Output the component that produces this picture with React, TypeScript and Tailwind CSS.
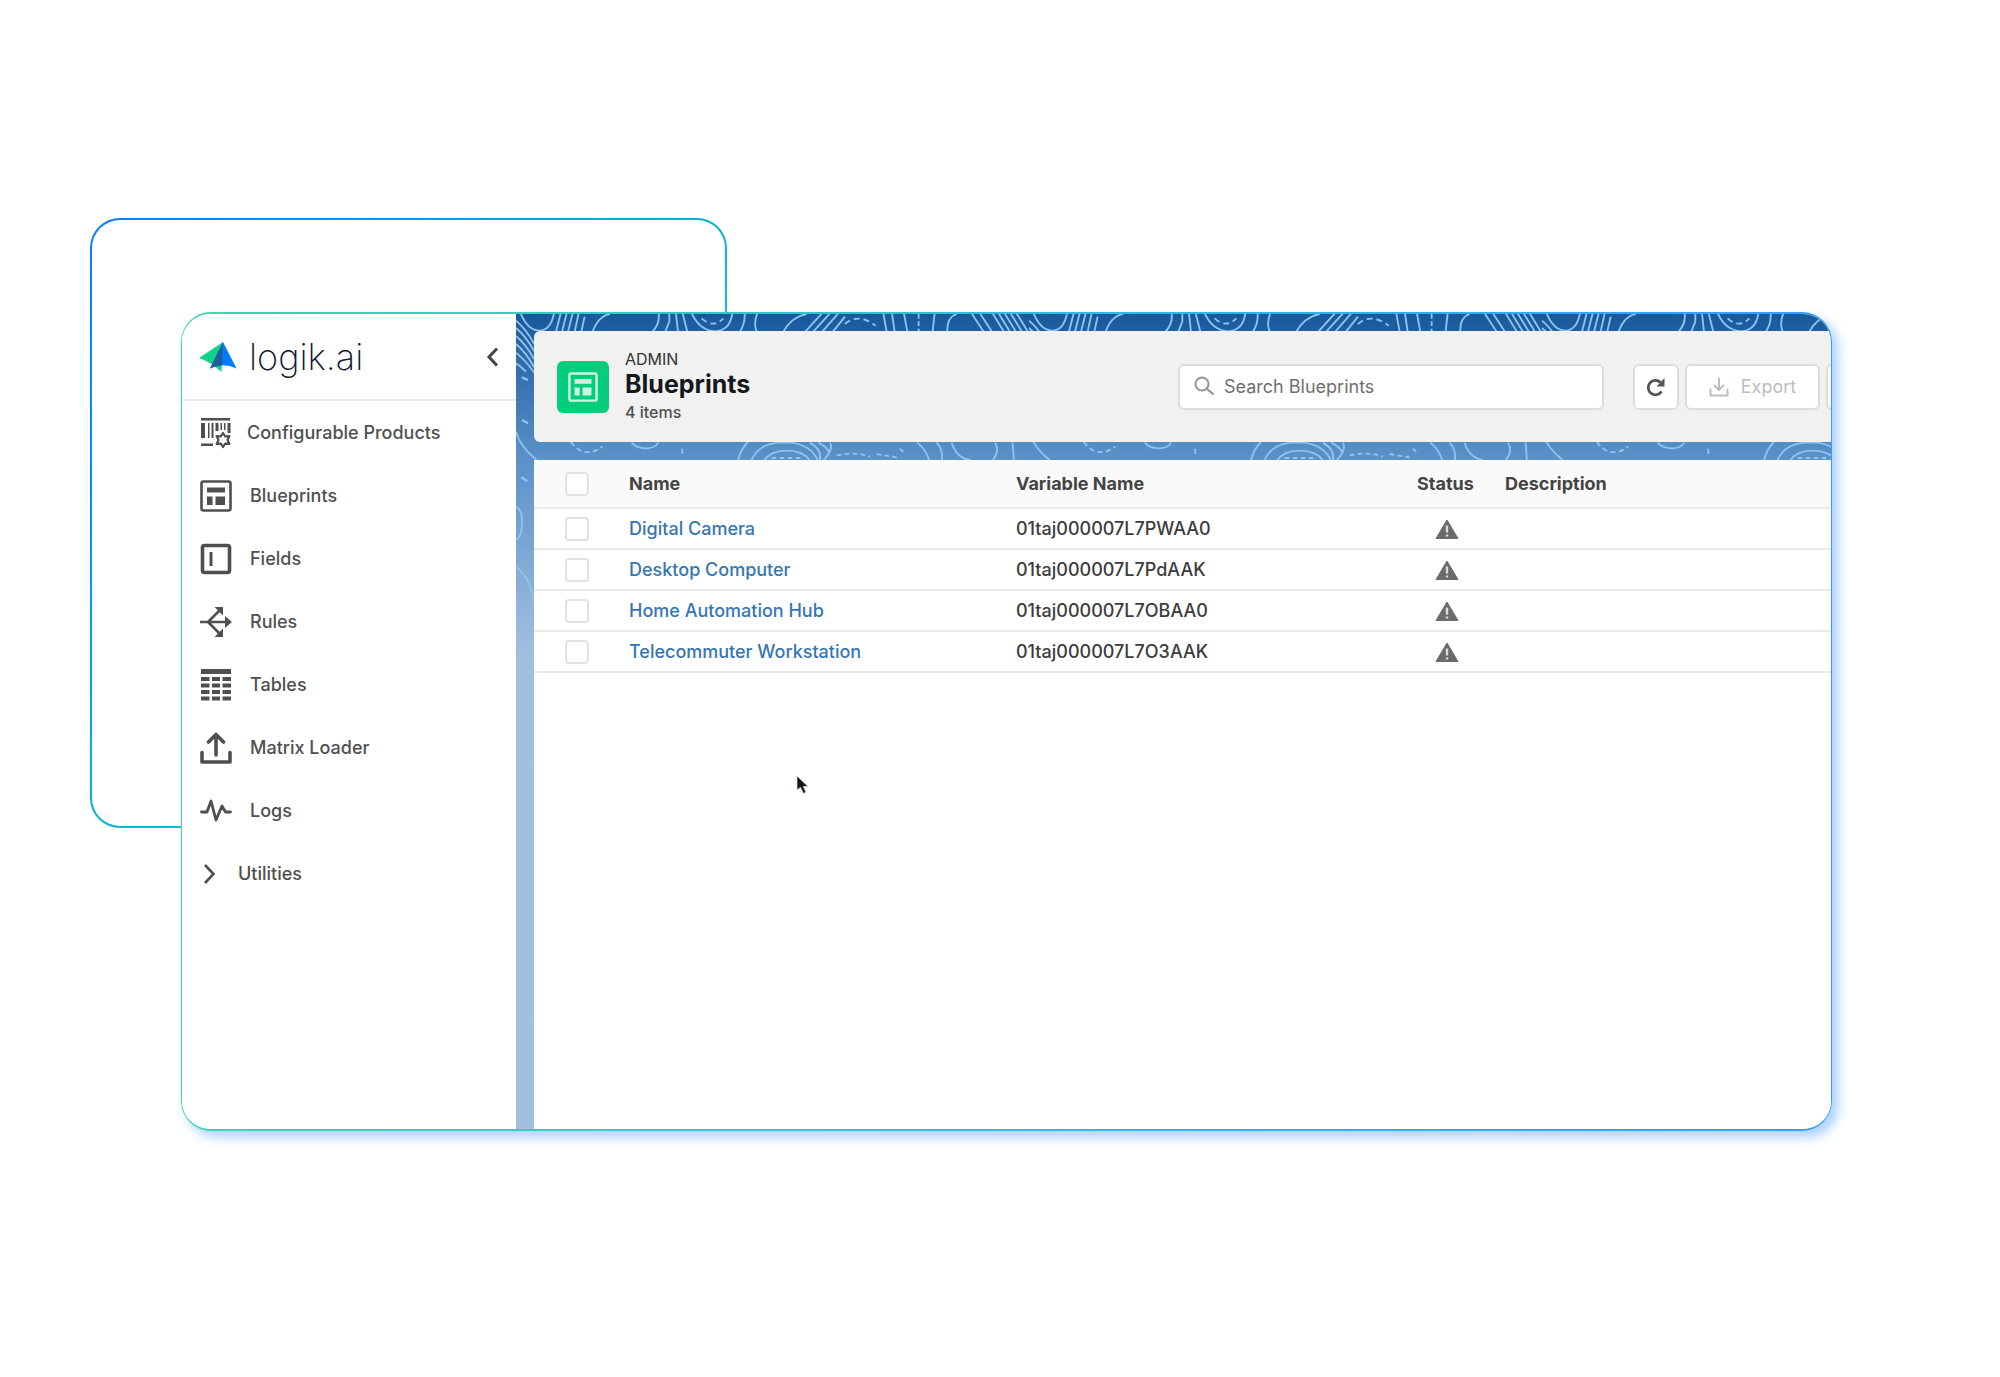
import React from "react"

type NavItem = {
    label: string
    gap: string
    icon: React.ReactNode
}

type Blueprint = {
    name: string
    variable: string
}

const ProductsIcon: React.FC = () => (
    <svg viewBox="0 0 32 32" className="size-8 shrink-0" fill="currentColor">
        <path d="M1 1h29v2.500H1zM1 6h4v15H1zM8 6h1.500v15H8zM11.500 6h2v15h-2zM15.500 6h3v8h-3zM20.500 6h1.500v7h-1.500zM24 6h1.500v7H24zM27.500 6h3v10h-3zM1 26.500h12v2.500H1z" />
        <path d="M23 16l2.200 3.400 4.200-.3-1.900 3.900 1.900 3.900-4.200-.3L23 30l-2.200-3.400-4.200.3 1.900-3.900-1.900-3.900 4.200.3z" fill="#fff" stroke="currentColor" strokeWidth="2.200" strokeLinejoin="round" />
    </svg>
)

const BlueprintIcon: React.FC<{ className: string }> = ({ className }) => (
    <svg viewBox="0 0 32 32" className={className} fill="currentColor">
        <rect x="1.500" y="1.500" width="29" height="29" rx="2" fill="none" stroke="currentColor" strokeWidth="2.600" />
        <path d="M7 7.500h18v5H7zM7 16.500h5.500v8.500H7zM15.500 16.500H25v8.500h-9.500z" />
    </svg>
)

const FieldsIcon: React.FC = () => (
    <svg viewBox="0 0 32 32" className="size-8 shrink-0">
        <rect x="2.500" y="2.500" width="27" height="27" rx="2" fill="none" stroke="currentColor" strokeWidth="3.600" />
        <path d="M9.500 9h3v14h-3z" fill="currentColor" />
    </svg>
)

const RulesIcon: React.FC = () => (
    <svg viewBox="0 0 32 32" className="size-8 shrink-0" fill="none" stroke="currentColor" strokeWidth="2.600">
        <path d="M0 16h28M8 16L20 4M8 16l12 12" />
        <path d="M14.500 1H23v8.500zM14.500 31H23v-8.500zM25 10l7 6-7 6z" fill="currentColor" stroke="none" />
    </svg>
)

const TablesIcon: React.FC = () => (
    <svg viewBox="0 0 32 32" className="size-8 shrink-0" fill="currentColor">
        <path d="M1 0h30v5H1z" />
        {[8, 14.500, 21, 27.500].map((y) => (
            <path key={y} d={`M1 ${y}h8.500v4H1zM12 ${y}h8v4h-8zM22.500 ${y}H31v4h-8.500z`} />
        ))}
    </svg>
)

const LoaderIcon: React.FC = () => (
    <svg viewBox="0 0 32 32" className="size-8 shrink-0" fill="none" stroke="currentColor" strokeWidth="3.600" strokeLinecap="round" strokeLinejoin="round">
        <path d="M2 20.500V30h28v-9.500M16 23V3M8.500 10L16 2.500l7.500 7.500" />
    </svg>
)

const LogsIcon: React.FC = () => (
    <svg viewBox="0 0 32 32" className="size-8 shrink-0" fill="none" stroke="currentColor" strokeWidth="2.800" strokeLinecap="round" strokeLinejoin="round">
        <path d="M1.500 17H7l4-11 5 19 6-14 3.500 6H30.500" />
    </svg>
)

const ChevronIcon: React.FC = () => (
    <svg viewBox="0 0 20 22" className="h-[22px] w-5 shrink-0" fill="none" stroke="currentColor" strokeWidth="2.600">
        <path d="M5 2l8.500 9L5 20" />
    </svg>
)

const WarningIcon: React.FC = () => (
    <svg viewBox="0 0 24 20" className="mx-auto h-5 w-6 text-[#6b6b6b]" aria-label="Warning">
        <path d="M12 1L23 19.500H1z" fill="currentColor" stroke="currentColor" strokeLinejoin="round" />
        <path d="M12 6.500v7M12 15.500v2" stroke="#dcdcdc" strokeWidth="2.400" />
    </svg>
)

const Logo: React.FC = () => (
    <svg viewBox="0 0 38 30" className="h-[30px] w-[38px] shrink-0">
        <path d="M24 0L0 16q12 4 22.500 14z" fill="#0fd488" />
        <path d="M24 0l13.500 26.500Q24 20 11 26.500z" fill="#007bff" />
        <path d="M24 0L11 26.500q6-3 12-3z" fill="#1c5f9c" />
    </svg>
)

const navItems: NavItem[] = [
    { label: "Configurable Products", gap: "gap-[15px]", icon: <ProductsIcon /> },
    { label: "Blueprints", gap: "gap-[18px]", icon: <BlueprintIcon className="size-8 shrink-0" /> },
    { label: "Fields", gap: "gap-[18px]", icon: <FieldsIcon /> },
    { label: "Rules", gap: "gap-[18px]", icon: <RulesIcon /> },
    { label: "Tables", gap: "gap-[18px]", icon: <TablesIcon /> },
    { label: "Matrix Loader", gap: "gap-[18px]", icon: <LoaderIcon /> },
    { label: "Logs", gap: "gap-[18px]", icon: <LogsIcon /> },
    { label: "Utilities", gap: "gap-[18px]", icon: <ChevronIcon /> },
]

const blueprints: Blueprint[] = [
    { name: "Digital Camera", variable: "01taj000007L7PWAA0" },
    { name: "Desktop Computer", variable: "01taj000007L7PdAAK" },
    { name: "Home Automation Hub", variable: "01taj000007L7OBAA0" },
    { name: "Telecommuter Workstation", variable: "01taj000007L7O3AAK" },
]

// contour lines behind the page, one tile repeats along the bar
const Contours: React.FC = () => (
    <svg className="absolute inset-0 h-full w-full" aria-hidden="true">
        <defs>
            <pattern id="contours" width="513" height="2000" patternUnits="userSpaceOnUse">
                <g transform="translate(-6 -14) scale(0.3333)" fill="none" stroke="#8fc4f0" strokeWidth="5.500">
                    <path d="M32 40q20 50 55 52q35 0 45-52M152 40l-14 55M170 40l-14 55M188 40l-14 55M206 40l-12 55M224 50l-10 45M300 42q-35 5-52 53" />
                    <path d="M446 40q4 30-18 55M478 40v25l-12 30M498 40l6 55M518 40l14 55M545 40q25 52 70 54q45-2 52-54M704 40q2 30-14 55M742 40q-12 30-2 55" />
                    <path d="M575 55q35 32 65 0M1005 72q40-35 92 5" strokeDasharray="18 12" />
                    <path d="M890 42q-45 8-70 53M936 40l-50 55M960 40l-50 55M985 40l-48 55M1005 50l-36 45M1120 40l10 55M1146 40l8 55M1182 40l10 55M1274 40l-6 55M1340 42q-30 10-28 53" />
                    <path d="M1226 42v55" strokeDasharray="14 8" />
                    <path d="M1385 40l36 55M1410 40l36 55M1448 40l34 55M1466 40l34 55M1484 40l34 55M1502 40l34 55M1520 40l34 55" />
                    <path d="M18 62q30 25 55 70M18 84q30 25 55 70M18 108q30 25 55 70M18 132q30 25 55 70M18 158q30 25 55 60M18 190q16 10 30 25" />
                    <path d="M36 232l18 8M36 360l18 10M34 532l18 12" strokeWidth="7" />
                    <path d="M18 395q12 45 62 85M18 620q20 10 18 50q0 40-18 50M18 800q50 40 55 120" />
                    <path d="M182 425q40 55 95 15" strokeDasharray="16 10" />
                    <path d="M365 428q15 17 42 17q28 0 38-17M517 446v16" />
                    <path d="M684 482q8-35 30-56M724 482q20-48 80-54h40q60 8 80 54M762 482q20-30 68-30q50 0 70 30M925 428q26 12 34 32M900 428q36 20 30 54M960 428q12 20-20 54" />
                    <path d="M785 474h90M980 466q60-12 100 4M1100 462l60 10M1170 446l14 14" strokeDasharray="14 10" />
                    <path d="M1222 428q28 22 36 54M1280 428q20 20 16 54M1325 428q14 45 55 52M1455 428q16 24-6 52M1508 428l4 54" />
                </g>
            </pattern>
        </defs>
        <rect width="100%" height="100%" fill="url(#contours)" />
    </svg>
)

const Checkbox: React.FC<{ label: string }> = ({ label }) => (
    <input
        type="checkbox"
        aria-label={label}
        className="block size-6 appearance-none rounded-sm border-2 border-[#e2e2e2] bg-white"
    />
)

const Sidebar: React.FC = () => {
    return (
        <aside className="w-[334px] shrink-0 bg-white">
            <div className="flex h-[87px] items-center border-b-2 border-[#ececec] pr-4 pl-[17px]">
                <Logo />
                <span className="ml-3 font-[Inter,sans-serif] text-4xl leading-10 font-extralight text-[#0e1a2b]">
                    logik.ai
                </span>
                <button type="button" aria-label="Collapse menu" className="ml-auto text-[#444]">
                    <svg viewBox="0 0 16 20" className="h-5 w-4" fill="none" stroke="currentColor" strokeWidth="3">
                        <path d="M13 1.500L5 10l8 8.500" />
                    </svg>
                </button>
            </div>
            <nav>
                <ul>
                    {navItems.map((item) => (
                        <li key={item.label}>
                            <a href="#" className={`flex h-[63px] items-center pl-[18px] text-[#4f4f4f] ${item.gap}`}>
                                {item.icon}
                                <span className="text-lg font-medium">{item.label}</span>
                            </a>
                        </li>
                    ))}
                </ul>
            </nav>
        </aside>
    )
}

const PageHeader: React.FC = () => {
    return (
        <header className="flex h-[111px] items-center overflow-hidden rounded-l-md bg-[#f1f1ef] pl-[23px]">
            <div className="flex size-[52px] shrink-0 items-center justify-center rounded-md bg-[#04ce7c] text-[#cdf7e2]">
                <BlueprintIcon className="size-[30px]" />
            </div>
            <div className="ml-4">
                <p className="text-base leading-5 text-[#333]">ADMIN</p>
                <h1 className="text-[25px] leading-[30px] font-bold text-[#14181c]">Blueprints</h1>
                <p className="text-base leading-[26px] font-medium text-[#505050]">4 items</p>
            </div>
            <div className="ml-auto flex grow items-center justify-end gap-[6px]">
                <div className="relative mr-[23px] ml-8 h-[46px] w-full max-w-[426px]">
                    <svg viewBox="0 0 20 20" className="absolute top-3 left-4 size-5 text-[#929292]" fill="none" stroke="currentColor" strokeWidth="2">
                        <circle cx="8" cy="8" r="6.500" />
                        <path d="M12.500 12.500l7 6" />
                    </svg>
                    <input
                        type="search"
                        aria-label="Search Blueprints"
                        placeholder="Search Blueprints"
                        className="h-full w-full rounded-md border-2 border-[#dcdcdc] bg-white pr-3 pl-11 text-lg placeholder:text-[#6f6f6f]"
                    />
                </div>
                <button type="button" aria-label="Refresh" className="flex size-[46px] shrink-0 items-center justify-center rounded-md border-2 border-[#dcdcdc] bg-white text-[#555]">
                    <svg viewBox="0 0 20 20" className="size-5" fill="none" stroke="currentColor" strokeWidth="2.800">
                        <path d="M15.500 14.500A7.200 7.200 0 1 1 14.500 5.500" />
                        <path d="M18.500 1v8.500H10.500z" fill="currentColor" stroke="none" />
                    </svg>
                </button>
                <button type="button" className="flex h-[46px] w-[135px] shrink-0 items-center justify-center gap-3 rounded-md border-2 border-[#dcdcdc] bg-white text-lg text-[#bdbdbd]">
                    <svg viewBox="0 0 20 20" className="size-5" fill="none" stroke="currentColor" strokeWidth="2" strokeLinecap="round" strokeLinejoin="round">
                        <path d="M10 1.500v11M5.500 8.500L10 13l4.500-4.500M1.500 12.500V18.500h17v-6" />
                    </svg>
                    Export
                </button>
                <button type="button" aria-label="More actions" className="-mr-[55px] h-[46px] w-[60px] shrink-0 rounded-md border-2 border-[#dcdcdc] bg-white" />
            </div>
        </header>
    )
}

const BlueprintTable: React.FC = () => {
    return (
        <table className="w-full table-fixed text-left text-lg">
            <colgroup>
                <col className="w-[95px]" />
                <col className="w-[387px]" />
                <col className="w-[401px]" />
                <col className="w-[88px]" />
                <col />
            </colgroup>
            <thead className="bg-[#fafafa] text-[#444]">
                <tr className="h-12 border-b-2 border-[#eaeaea]">
                    <th className="pl-[31px]">
                        <Checkbox label="Select all" />
                    </th>
                    <th className="font-bold">Name</th>
                    <th className="font-bold">Variable Name</th>
                    <th className="font-bold">Status</th>
                    <th className="font-bold">Description</th>
                </tr>
            </thead>
            <tbody className="font-medium">
                {blueprints.map((row) => (
                    <tr key={row.name} className="h-[41px] border-b-2 border-[#eaeaea]">
                        <td className="pl-[31px]">
                            <Checkbox label={`Select ${row.name}`} />
                        </td>
                        <td>
                            <a href="#" className="text-[#3576b4]">
                                {row.name}
                            </a>
                        </td>
                        <td className="text-[#3c3c3c]">{row.variable}</td>
                        <td className="pr-7">
                            <WarningIcon />
                        </td>
                        <td />
                    </tr>
                ))}
            </tbody>
        </table>
    )
}

const App: React.FC = () => {
    return (
        <div className="min-h-screen bg-white pt-[312px] pr-[168px] pb-[246px] pl-[181px] font-[Inter,sans-serif]">
            <div className="relative">
                <div className="absolute -top-[94px] -left-[91px] h-[610px] w-[637px] rounded-[30px] bg-linear-to-br from-[#0a7cff] to-[#19bccb] to-60% p-0.5">
                    <div className="h-full rounded-[28px] bg-white" />
                </div>
                <div className="relative rounded-[30px] bg-linear-to-r from-[#3ed6ac] to-[#3a9cff] px-px py-0.5 shadow-[6px_6px_12px_#a9d0ff]">
                    <div className="flex min-h-[815px] overflow-hidden rounded-[28px] bg-white">
                        <Sidebar />
                        <main className="relative min-w-0 grow bg-linear-to-b from-[#17599b] from-0% via-[#5b92c9] via-18% to-[#a3bfe0] to-42%">
                            <Contours />
                            <div className="relative flex min-h-full flex-col pt-[17px] pl-[18px]">
                                <PageHeader />
                                <div className="mt-[18px] grow bg-white">
                                    <BlueprintTable />
                                </div>
                            </div>
                            <svg viewBox="0 0 14 20" className="absolute top-[461px] left-[280px] h-5 w-[14px]">
                                <path d="M1 1v14l3.500-2.500 3 6 2.500-1.200-2.700-5.800H12z" fill="#10151a" stroke="#d8d8d8" strokeWidth="0.800" />
                            </svg>
                        </main>
                    </div>
                </div>
            </div>
        </div>
    )
}

export default App
